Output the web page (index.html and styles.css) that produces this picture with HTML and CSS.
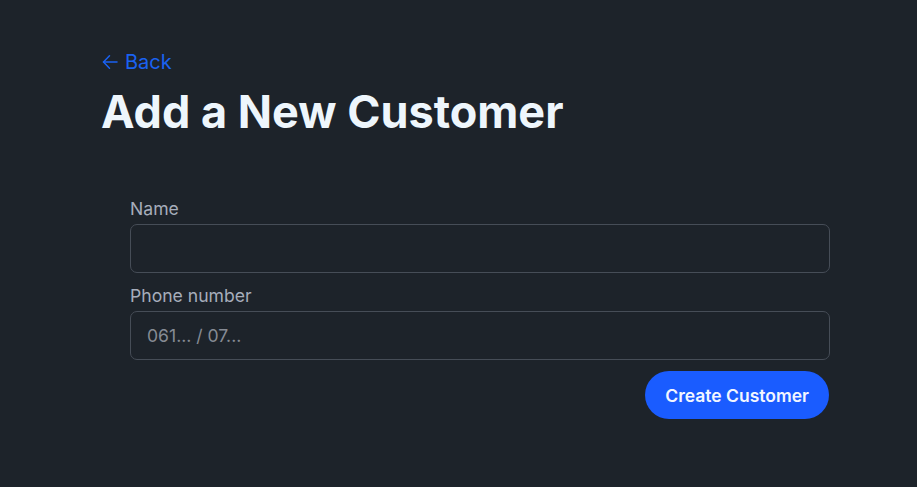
FILE: index.html
```html
<!DOCTYPE html>
<html lang="en">
<head>
<meta charset="utf-8">
<title>Add a New Customer</title>
<link rel="stylesheet" href="styles.css">
</head>
<body>
<main class="page">
  <a class="back" href="#">
    <svg class="back-icon" viewBox="0 0 16 16" width="16" height="16" fill="none" stroke="currentColor" stroke-width="1.5" stroke-linecap="round" stroke-linejoin="round"><path d="M15 8H1.5"/><path d="M7.5 1.8L1.5 8l6 6.2"/></svg>
    <span>Back</span>
  </a>
  <h1 class="title">Add a New Customer</h1>
  <form class="form">
    <label class="field">
      <span class="label">Name</span>
      <input class="input" type="text">
    </label>
    <label class="field">
      <span class="label">Phone number</span>
      <input class="input" type="tel" placeholder="061... / 07...">
    </label>
    <div class="actions">
      <button class="btn" type="button">Create Customer</button>
    </div>
  </form>
</main>
</body>
</html>
```
FILE: styles.css
```css
* { box-sizing: border-box; }
html, body {
  margin: 0;
  background: #1d232a;
  font-family: Inter, "Noto Sans", sans-serif;
  color: #a6adbb;
}
.page {
  padding: 48px 0 0 101px;
  width: 917px;
}
.back {
  display: flex;
  align-items: center;
  gap: 7px;
  color: #1a62f2;
  text-decoration: none;
  font-size: 20px;
  line-height: 28px;
  height: 28px;
}
.back-icon { display: block; margin-left: 1px; }
.title {
  margin: 9px 0 0;
  font-size: 45px;
  line-height: 53px;
  font-weight: 700;
  color: #eef6fc;
}
.form {
  margin: 58px 0 0 29px;
  width: 700px;
  display: flex;
  flex-direction: column;
  gap: 10px;
}
.field {
  display: flex;
  flex-direction: column;
  gap: 3px;
}
.label {
  font-size: 17.6px;
  line-height: 24px;
  padding-top: 1px;
  color: #a6adbb;
}
.input {
  height: 49px;
  width: 100%;
  border: 1px solid #464d57;
  border-radius: 7px;
  background: #1d232a;
  padding: 0 16px;
  font-family: inherit;
  font-size: 17.6px;
  color: #a6adbb;
  outline: none;
}
.input::placeholder { color: #868b94; }
.actions {
  display: flex;
  justify-content: flex-end;
  margin-top: 1px;
}
.btn {
  height: 48px;
  padding: 0 20px;
  border: none;
  border-radius: 24px;
  background: #1a5cff;
  color: #f2f6ff;
  font-family: inherit;
  font-size: 17.5px;
  font-weight: 600;
  margin-right: 1px;
}
```
